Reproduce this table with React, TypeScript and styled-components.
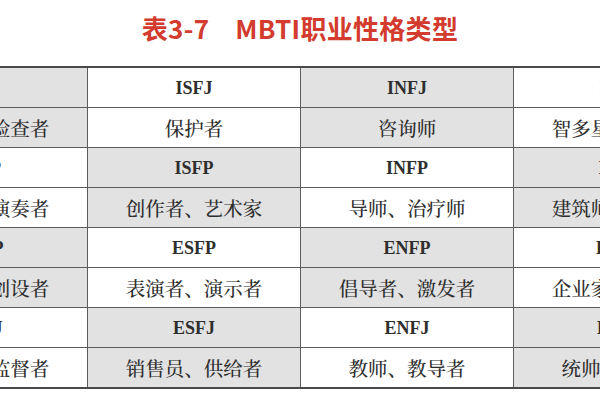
import { Fragment } from "react";
import styled, { createGlobalStyle } from "styled-components";

const GlobalStyle = createGlobalStyle`
  html, body {
    margin: 0;
    padding: 0;
    background: #ffffff;
    overflow: hidden;
  }
`;

const Page = styled.div`
  width: 600px;
  height: 400px;
  display: flex;
  flex-direction: column;
  overflow: hidden;
`;

const Title = styled.h1`
  box-sizing: border-box;
  height: 66px;
  margin: 0;
  padding-top: 14px;
  text-align: center;
  font-family: "Noto Sans CJK SC", "Noto Sans", sans-serif;
  font-size: 26px;
  line-height: 28px;
  font-weight: 700;
  color: #d23b2e;
  letter-spacing: 0.3px;
`;

const Gap = styled.span`
  display: inline-block;
  width: 26px;
`;

const Table = styled.div`
  display: grid;
  grid-template-columns: repeat(4, 212px);
  grid-auto-rows: 39px;
  gap: 1px;
  width: 851px;
  margin-left: -125px;
  background: #5c5c5c;
  border-top: 2px solid #4a4a4a;
  border-bottom: 2px solid #4a4a4a;
`;

const Cell = styled.div<{ $shade: boolean; $latin?: boolean }>`
  display: flex;
  align-items: center;
  justify-content: center;
  white-space: nowrap;
  background: ${(p) => (p.$shade ? "#e2e2e2" : "#ffffff")};
  color: #2e2e2e;
  font-family: ${(p) =>
    p.$latin
      ? `"Liberation Serif", "Times New Roman", serif`
      : `"Noto Serif CJK SC", "Noto Sans CJK SC", serif`};
  font-size: ${(p) => (p.$latin ? "18px" : "19.5px")};
  font-weight: ${(p) => (p.$latin ? 700 : 500)};
  padding-top: ${(p) => (p.$latin ? "1px" : "0")};
`;

const groups = [
  {
    types: ["ISTJ", "ISFJ", "INFJ", "INTJ"],
    names: ["公务员、检查者", "保护者", "咨询师", "智多星、科学家"],
  },
  {
    types: ["ISTP", "ISFP", "INFP", "INTP"],
    names: ["操作者、演奏者", "创作者、艺术家", "导师、治疗师", "建筑师、设计师"],
  },
  {
    types: ["ESTP", "ESFP", "ENFP", "ENTP"],
    names: ["发起者、创设者", "表演者、演示者", "倡导者、激发者", "企业家、发明家"],
  },
  {
    types: ["ESTJ", "ESFJ", "ENFJ", "ENTJ"],
    names: ["管理者、监督者", "销售员、供给者", "教师、教导者", "统帅、调度者"],
  },
];

export default function App() {
  return (
    <Page>
      <GlobalStyle />
      <Title>
        表3-7<Gap />MBTI职业性格类型
      </Title>
      <Table>
        {groups.map((g, gi) => (
          <Fragment key={gi}>
            {g.types.map((t, ci) => (
              <Cell key={`t${ci}`} $latin $shade={(ci + gi) % 2 === 0}>
                {t}
              </Cell>
            ))}
            {g.names.map((n, ci) => (
              <Cell key={`n${ci}`} $shade={(ci + gi) % 2 === 0}>
                {n}
              </Cell>
            ))}
          </Fragment>
        ))}
      </Table>
    </Page>
  );
}
